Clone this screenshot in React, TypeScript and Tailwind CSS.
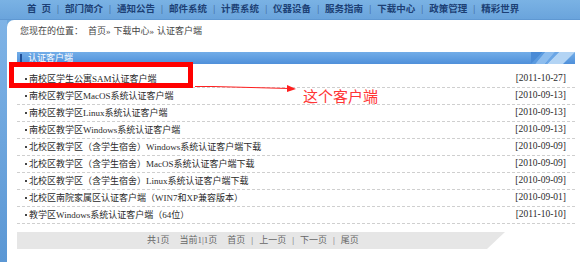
import React from "react";

const navItems = ["部门简介", "通知公告", "邮件系统", "计费系统", "仪器设备", "服务指南", "下载中心", "政策管理", "精彩世界"];

const rows: [string, string][] = [
  ["南校区学生公寓SAM认证客户端", "[2011-10-27]"],
  ["南校区教学区MacOS系统认证客户端", "[2010-09-13]"],
  ["南校区教学区Linux系统认证客户端", "[2010-09-13]"],
  ["南校区教学区Windows系统认证客户端", "[2010-09-13]"],
  ["北校区教学区（含学生宿舍）Windows系统认证客户端下载", "[2010-09-09]"],
  ["北校区教学区（含学生宿舍）MacOS系统认证客户端下载", "[2010-09-09]"],
  ["北校区教学区（含学生宿舍）Linux系统认证客户端下载", "[2010-09-09]"],
  ["北校区南院家属区认证客户端（WIN7和XP兼容版本）", "[2010-09-01]"],
  ["教学区Windows系统认证客户端（64位）", "[2011-10-10]"],
];

export default function App() {
  return (
    <div
      className="relative w-[580px] h-[262px] overflow-hidden bg-[#6fa8dc] flex flex-col"
      style={{ fontFamily: '"Liberation Serif", "Noto Sans CJK SC", sans-serif' }}
    >
      {/* Top nav */}
      <div className="h-[20px] flex items-center pl-[27px] text-[9.5px] font-bold text-[#1c3f74] bg-gradient-to-b from-[#7ab2e4] to-[#6aa4dc] border-b border-[#5f98d2] leading-none">
        <span>首</span>
        <span className="ml-[5px]">页</span>
        {navItems.map((n) => (
          <React.Fragment key={n}>
            <span className="mx-[5px] w-[4px] text-center font-normal text-[#34598c]">|</span>
            <span>{n}</span>
          </React.Fragment>
        ))}
      </div>

      {/* Body */}
      <div className="flex flex-1">
        <div className="w-[7px] bg-gradient-to-b from-[#7fb3e6] to-[#5b97d4]" />
        <div className="flex-1 bg-white rounded-tl-[7px] flex flex-col">
          <div className="h-[22px] flex items-center pl-[13px] text-[9px] text-[#444] leading-none">
            <span>您现在的位置：</span>
            <span className="ml-[5px]">首页»</span>
            <span className="ml-[3px]">下载中心»</span>
            <span className="ml-[3px]">认证客户端</span>
          </div>

          {/* Section header */}
          <div className="mt-[10px] ml-[10px] mr-[5px] h-[12px] flex items-center bg-gradient-to-b from-[#72ade8] to-[#4f90da] text-[9px] leading-none text-white">
            <span className="ml-[3px] w-[2px] h-[8px] bg-[#1f4f96]" />
            <span className="ml-[6px]">认证客户端</span>
            <svg className="ml-auto" width="44" height="12" viewBox="0 0 44 12">
              <polygon points="0,0 12,0 0,12" fill="#4a8bd6" />
              <polygon points="14,0 24,0 14,12 4,12" fill="#8dbdee" />
              <polygon points="28,0 44,0 32,12 16,12" fill="#b3d4f4" />
              <polygon points="12,0 14,0 4,12 0,12" fill="#5b9be0" />
              <polygon points="24,0 28,0 16,12 14,12" fill="#6aa6e6" />
            </svg>
          </div>

          {/* Rows */}
          <div className="mt-[7px] ml-[10px] mr-[5px] flex flex-col">
            {rows.map(([t, d]) => (
              <div
                key={t}
                className="h-[17px] flex items-center justify-between border-b border-dashed border-[#cfcfcf] text-[9px] text-[#2a2a2a] leading-none"
              >
                <div className="flex items-center pl-[8px]">
                  <span className="w-[2px] h-[2px] bg-[#444] mr-[2px]" />
                  <span>{t}</span>
                </div>
                <span className="pr-[9px] text-[9.5px]">{d}</span>
              </div>
            ))}
          </div>

          {/* Pagination */}
          <div className="mt-[8px] ml-[10px] w-[488px] h-[17px] flex items-center pl-[130px] bg-[#e6e6e6] text-[9px] text-[#666] leading-none [clip-path:polygon(0_0,100%_0,calc(100%-18px)_100%,0_100%)]">
            <span>共1页</span>
            <span className="ml-[10px]">当前1|1页</span>
            <span className="ml-[10px]">首页</span>
            <span className="mx-[6px]">|</span>
            <span>上一页</span>
            <span className="mx-[6px]">|</span>
            <span>下一页</span>
            <span className="mx-[6px]">|</span>
            <span>尾页</span>
          </div>
        </div>
      </div>

      {/* Annotation overlay */}
      <div className="absolute left-[9px] top-[62px] w-[184px] h-[26px] border-[5px] border-[#ff0000]" />
      <svg className="absolute left-[193px] top-[83px]" width="106" height="10" viewBox="0 0 106 10">
        <polyline points="2,3.5 20,3.5 96,5.5" fill="none" stroke="#ff2020" strokeWidth="1" />
        <polygon points="94,2 103,6 94,9" fill="#ff2020" />
      </svg>
      <div
        className="absolute left-[303px] top-[88px] text-[15px] leading-none text-[#ff3535]"
        style={{ fontFamily: '"Noto Sans CJK SC", sans-serif' }}
      >
        这个客户端
      </div>
    </div>
  );
}
